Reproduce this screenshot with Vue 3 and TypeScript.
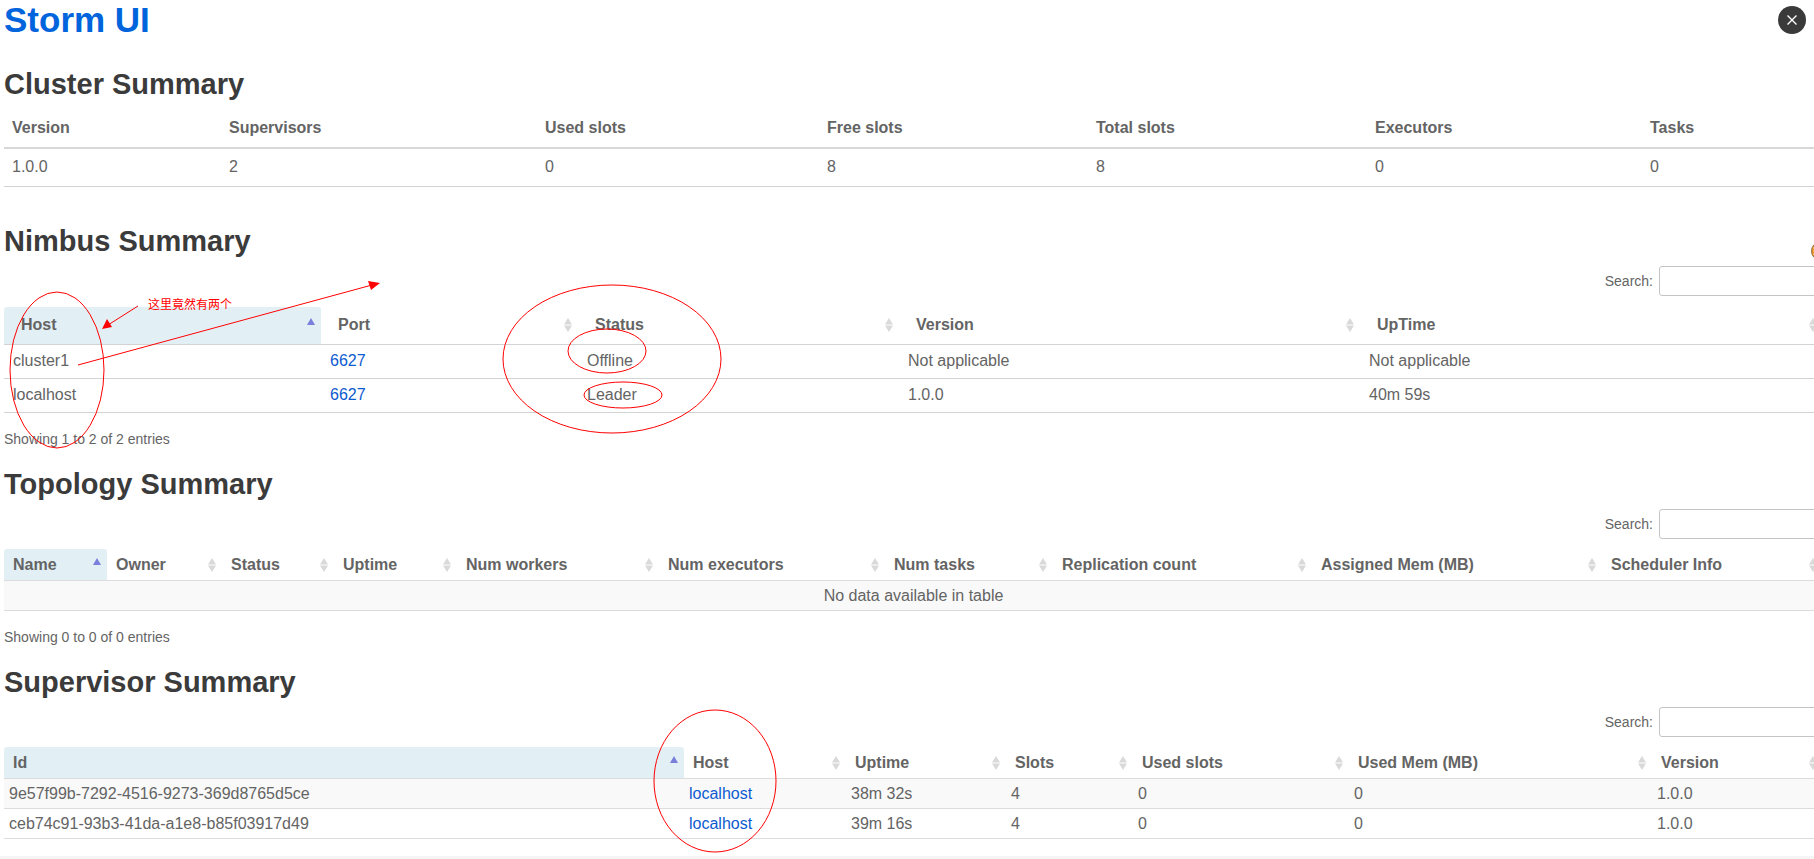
<script setup lang="ts">
import { ref } from 'vue'

interface Column {
  label: string
  weight: number
}

interface Cell {
  text: string
  link?: boolean
}

interface SummaryTable {
  id: string
  title: string
  kind: 'plain' | 'roomy' | 'striped'
  sortable: boolean
  columns: Column[]
  rows: Cell[][]
  info?: string
}

const cells = (...texts: string[]): Cell[] => texts.map((text) => ({ text }))

const tables: SummaryTable[] = [
  {
    id: 'cluster',
    title: 'Cluster Summary',
    kind: 'plain',
    sortable: false,
    columns: [
      { label: 'Version', weight: 217 },
      { label: 'Supervisors', weight: 316 },
      { label: 'Used slots', weight: 282 },
      { label: 'Free slots', weight: 269 },
      { label: 'Total slots', weight: 279 },
      { label: 'Executors', weight: 275 },
      { label: 'Tasks', weight: 181 },
    ],
    rows: [cells('1.0.0', '2', '0', '8', '8', '0', '0')],
  },
  {
    id: 'nimbus',
    title: 'Nimbus Summary',
    kind: 'roomy',
    sortable: true,
    columns: [
      { label: 'Host', weight: 317 },
      { label: 'Port', weight: 257 },
      { label: 'Status', weight: 321 },
      { label: 'Version', weight: 461 },
      { label: 'UpTime', weight: 463 },
    ],
    rows: [
      [{ text: 'cluster1' }, { text: '6627', link: true }, ...cells('Offline', 'Not applicable', 'Not applicable')],
      [{ text: 'localhost' }, { text: '6627', link: true }, ...cells('Leader', '1.0.0', '40m 59s')],
    ],
    info: 'Showing 1 to 2 of 2 entries',
  },
  {
    id: 'topology',
    title: 'Topology Summary',
    kind: 'striped',
    sortable: true,
    columns: [
      { label: 'Name', weight: 103 },
      { label: 'Owner', weight: 115 },
      { label: 'Status', weight: 112 },
      { label: 'Uptime', weight: 123 },
      { label: 'Num workers', weight: 202 },
      { label: 'Num executors', weight: 226 },
      { label: 'Num tasks', weight: 168 },
      { label: 'Replication count', weight: 259 },
      { label: 'Assigned Mem (MB)', weight: 290 },
      { label: 'Scheduler Info', weight: 221 },
    ],
    rows: [],
    info: 'Showing 0 to 0 of 0 entries',
  },
  {
    id: 'supervisor',
    title: 'Supervisor Summary',
    kind: 'striped',
    sortable: true,
    columns: [
      { label: 'Id', weight: 680 },
      { label: 'Host', weight: 162 },
      { label: 'Uptime', weight: 160 },
      { label: 'Slots', weight: 127 },
      { label: 'Used slots', weight: 216 },
      { label: 'Used Mem (MB)', weight: 303 },
      { label: 'Version', weight: 171 },
    ],
    rows: [
      [{ text: '9e57f99b-7292-4516-9273-369d8765d5ce' }, { text: 'localhost', link: true }, ...cells('38m 32s', '4', '0', '0', '1.0.0')],
      [{ text: 'ceb74c91-93b3-41da-a1e8-b85f03917d49' }, { text: 'localhost', link: true }, ...cells('39m 16s', '4', '0', '0', '1.0.0')],
    ],
  },
]

const queries = ref<Record<string, string>>({ nimbus: '', topology: '', supervisor: '' })

const share = (table: SummaryTable, column: Column): string => {
  const total = table.columns.reduce((sum, c) => sum + c.weight, 0)
  return `${(column.weight / total) * 100}%`
}
</script>

<template>
  <div class="page">
    <main class="content">
      <h1><a href="#">Storm UI</a></h1>

      <section v-for="table in tables" :key="table.id" :class="['summary', table.kind]">
        <h2>{{ table.title }}</h2>

        <div v-if="table.sortable" class="filter">
          <label :for="`search-${table.id}`">Search:</label>
          <input :id="`search-${table.id}`" v-model="queries[table.id]" type="text" />
        </div>

        <table>
          <colgroup>
            <col v-for="column in table.columns" :key="column.label" :style="{ width: share(table, column) }" />
          </colgroup>
          <thead>
            <tr>
              <th v-for="(column, i) in table.columns" :key="column.label" scope="col" :class="{ sorted: table.sortable && i === 0 }">
                <div class="head">
                  <span>{{ column.label }}</span>
                  <svg v-if="table.sortable && i === 0" class="sort" width="8" height="14" viewBox="0 0 8 14" aria-hidden="true">
                    <path d="M4 0L8 7H0Z" fill="#7a7fdc" />
                  </svg>
                  <svg v-else-if="table.sortable" class="sort" width="8" height="14" viewBox="0 0 8 14" aria-hidden="true">
                    <path d="M4 0L8 6.5H0ZM4 14L8 7.5H0Z" fill="#d9d9d9" />
                  </svg>
                </div>
              </th>
            </tr>
          </thead>
          <tbody>
            <tr v-for="(row, r) in table.rows" :key="r">
              <td v-for="(cell, c) in row" :key="c">
                <a v-if="cell.link" href="#">{{ cell.text }}</a>
                <template v-else>{{ cell.text }}</template>
              </td>
            </tr>
            <tr v-if="table.rows.length === 0">
              <td class="empty" :colspan="table.columns.length">No data available in table</td>
            </tr>
          </tbody>
        </table>

        <p v-if="table.info" class="info">{{ table.info }}</p>
      </section>
    </main>

    <footer class="strip"></footer>

    <svg class="marks" aria-hidden="true">
      <g fill="none" stroke="#f00" stroke-width="1">
        <ellipse cx="57" cy="370" rx="47" ry="78" />
        <ellipse cx="612" cy="359" rx="109" ry="74" />
        <ellipse cx="607" cy="351" rx="39" ry="22" />
        <ellipse cx="623" cy="395" rx="39" ry="13" />
        <ellipse cx="715" cy="781" rx="61" ry="71" />
        <path d="M78 365L372 285M138 306L108 325" />
      </g>
      <path d="M380 283L368 281L371 290ZM102 329L107 319L112 327Z" fill="#f00" />
    </svg>
    <span class="note">这里竟然有两个</span>

    <svg class="badge" width="16" height="18" viewBox="0 0 16 18" aria-hidden="true">
      <ellipse cx="8" cy="9" rx="7.5" ry="8.5" fill="#f08c14" stroke="#8f7550" />
      <path d="M2 6H14M2 9H14M2 12H14" stroke="#ffe3b0" stroke-width="1" />
    </svg>
    <button class="close" type="button" aria-label="Close">
      <svg width="10" height="10" viewBox="0 0 10 10" aria-hidden="true">
        <path d="M0.5 0.5L9.5 9.5M9.5 0.5L0.5 9.5" stroke="#fff" stroke-width="1.4" />
      </svg>
    </button>
  </div>
</template>

<style>
body {
  margin: 0;
  background: #fff;
}
</style>

<style scoped>
.page {
  position: relative;
  overflow: hidden;
  min-height: 100vh;
  display: flex;
  flex-direction: column;
  font-family: "Liberation Sans", Arial, sans-serif;
  font-size: 16px;
  line-height: 20px;
  color: #646464;
}

/* The tables run slightly past the right edge of the window. */
.content {
  flex: 1;
  margin: 0 -9px 0 4px;
}

a {
  color: #0d5bd0;
  text-decoration: none;
}

h1 {
  margin: 0;
  font-size: 35px;
  line-height: 40px;
}

h1 a {
  color: #0064dc;
}

h2 {
  margin: 0;
  font-size: 29px;
  line-height: 36px;
  color: #3b3b3b;
}

table {
  width: 100%;
  table-layout: fixed;
  border-collapse: separate;
  border-spacing: 0;
}

th,
td {
  box-sizing: border-box;
  text-align: left;
  padding: 0 8px 2px;
  white-space: nowrap;
  border-bottom: 1px solid #d3d3d3;
}

.head {
  display: flex;
  align-items: center;
  justify-content: space-between;
}

.filter {
  display: flex;
  align-items: center;
  justify-content: flex-end;
  gap: 6px;
  height: 30px;
  font-size: 14px;
}

.filter input {
  box-sizing: border-box;
  width: 164px;
  height: 30px;
  border: 1px solid #c4c4c4;
  border-radius: 3px;
  background: #fff;
  padding: 0 8px;
  font: inherit;
  color: inherit;
}

.info {
  margin: 0;
  font-size: 14px;
  line-height: 20px;
}

.plain {
  padding-top: 26px;
}

.plain th {
  height: 47px;
  padding-top: 6px;
  padding-bottom: 0;
  border-bottom: 2px solid #d8d8d8;
}

.plain td {
  height: 38px;
}

.roomy {
  padding-top: 36px;
}

.roomy .filter {
  margin: 7px 0 11px;
}

.roomy th {
  height: 38px;
  padding: 0 6px 2px 17px;
}

.roomy td {
  height: 34px;
  padding: 0 9px 2px;
}

.roomy .info {
  margin-top: 16px;
}

.striped {
  padding-top: 17px;
}

.striped .filter {
  margin: 7px 0 10px;
}

.striped th {
  height: 32px;
  padding: 0 6px 0 9px;
  border-bottom-color: #dcdcdc;
}

.striped td {
  height: 30px;
  padding: 0 5px;
  border-bottom-color: #dcdcdc;
}

.striped tbody tr:nth-child(odd) td {
  background: #f9f9f9;
}

.striped .info {
  margin-top: 16px;
}

th.sorted {
  background: #e2f0f6;
  border-radius: 3px 3px 0 0;
}

td.empty {
  text-align: center;
}

.strip {
  height: 3px;
  background: #f5f5f5;
}

.marks {
  position: absolute;
  top: 0;
  left: 0;
  width: 100%;
  height: 100%;
  pointer-events: none;
}

.note {
  position: absolute;
  top: 296px;
  left: 148px;
  font-family: "Liberation Sans", "Noto Sans CJK SC", sans-serif;
  font-size: 12px;
  line-height: 18px;
  color: #f00;
}

.badge {
  position: absolute;
  top: 242px;
  right: -13px;
}

.close {
  position: absolute;
  top: 6px;
  right: 8px;
  display: flex;
  align-items: center;
  justify-content: center;
  width: 28px;
  height: 28px;
  padding: 0;
  border: 0;
  border-radius: 50%;
  background: #3a3a3a;
}
</style>
